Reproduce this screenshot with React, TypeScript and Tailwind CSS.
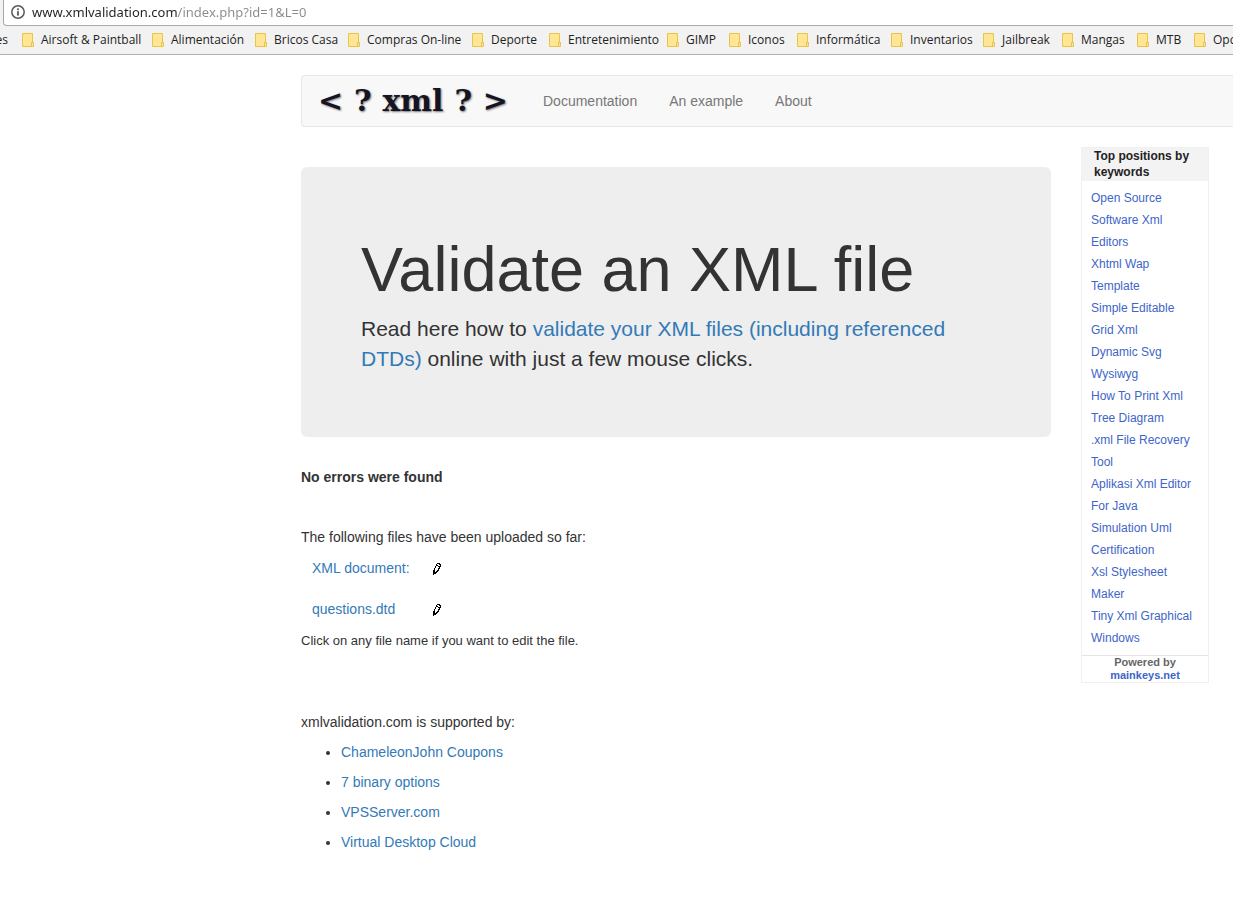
import React from "react";

type Bookmark = { name: string; width: string };

const bookmarks: Bookmark[] = [
  { name: "Airsoft & Paintball", width: "w-[130px]" },
  { name: "Alimentación", width: "w-[103px]" },
  { name: "Bricos Casa", width: "w-[93px]" },
  { name: "Compras On-line", width: "w-[124px]" },
  { name: "Deporte", width: "w-[77px]" },
  { name: "Entretenimiento", width: "w-[118px]" },
  { name: "GIMP", width: "w-[62px]" },
  { name: "Iconos", width: "w-[68px]" },
  { name: "Informática", width: "w-[94px]" },
  { name: "Inventarios", width: "w-[92px]" },
  { name: "Jailbreak", width: "w-[79px]" },
  { name: "Mangas", width: "w-[75px]" },
  { name: "MTB", width: "w-[57px]" },
  { name: "Opc", width: "w-[60px]" },
];

const keywords = [
  "Open Source Software Xml Editors",
  "Xhtml Wap Template",
  "Simple Editable Grid Xml",
  "Dynamic Svg Wysiwyg",
  "How To Print Xml",
  "Tree Diagram",
  ".xml File Recovery Tool",
  "Aplikasi Xml Editor For Java",
  "Simulation Uml Certification",
  "Xsl Stylesheet Maker",
  "Tiny Xml Graphical Windows",
];

const files = ["XML document:", "questions.dtd"];

const sponsors = [
  "ChameleonJohn Coupons",
  "7 binary options",
  "VPSServer.com",
  "Virtual Desktop Cloud",
];

function InfoIcon() {
  return (
    <svg width="16" height="16" viewBox="0 0 16 16" className="shrink-0" aria-hidden="true">
      <circle cx="8" cy="8" r="6.2" fill="none" stroke="#5a5a5a" strokeWidth="1.5" />
      <rect x="7.1" y="4.4" width="1.8" height="1.8" fill="#5a5a5a" />
      <rect x="7.1" y="7.2" width="1.8" height="4.4" fill="#5a5a5a" />
    </svg>
  );
}

function FolderIcon() {
  return (
    <svg width="12" height="14" viewBox="0 0 12 14" className="shrink-0" aria-hidden="true">
      <path d="M.5 .5h10v9h1v4H.5z" fill="#ffe694" stroke="#e8c54a" />
      <path d="M9.500 13v-3.500h2" fill="none" stroke="#e8c54a" />
    </svg>
  );
}

function PencilIcon() {
  return (
    <svg width="8" height="12" viewBox="0 0 8 12" shapeRendering="crispEdges" aria-hidden="true">
      <path
        d="M4 0h3v1H4zM3 1h1v1H3zM6 1h2v1H6zM3 2h2v1H3zM7 2h1v1H7zM2 3h1v1H2zM5 3h3v1H5zM2 4h1v1H2zM6 4h1v1H6zM1 5h1v1H1zM5 5h2v1H5zM1 6h1v1H1zM5 6h1v1H5zM0 7h2v1H0zM4 7h2v1H4zM0 8h2v1H0zM3 8h2v1H3zM0 9h4v1H0zM0 10h3v1H0zM0 11h1v1H0z"
        fill="#000"
      />
    </svg>
  );
}

function BrowserChrome() {
  return (
    <div className="overflow-hidden border-b border-[#b0b0b0] bg-[#f2f2f2] font-['Open_Sans',sans-serif]">
      <div className="ml-[3px] flex h-[26px] items-center gap-1.5 rounded-bl-sm border-b border-l border-[#a9a9a9] bg-white pb-0.5 pl-1.5">
        <InfoIcon />
        <input
          type="text"
          aria-label="Address"
          defaultValue="www.xmlvalidation.com/index.php?id=1&L=0"
          className="h-5 min-w-0 flex-1 bg-[linear-gradient(90deg,#222_145px,#8a8a8a_145px)] bg-clip-text font-['Noto_Sans',sans-serif] text-[13px] text-transparent outline-none"
        />
      </div>
      <nav aria-label="Bookmarks" className="flex h-7 items-center text-[12px] whitespace-nowrap text-[#222]">
        <a href="#" className="flex w-[22px] shrink-0 justify-end pr-3.5">es</a>
        {bookmarks.map((b) => (
          <a key={b.name} href="#" className={`flex shrink-0 items-center gap-[7px] ${b.width}`}>
            <FolderIcon />
            {b.name}
          </a>
        ))}
      </nav>
    </div>
  );
}

function Logo() {
  return (
    <a
      href="#"
      className="flex h-8 w-[190px] items-center justify-between font-['DejaVu_Serif',serif] text-[30px] leading-8 font-bold text-[#141424] [text-shadow:1px_1px_2px_#777]"
    >
      <span>&lt;</span>
      <span>?</span>
      <span>xml</span>
      <span>?</span>
      <span>&gt;</span>
    </a>
  );
}

function Sidebar() {
  return (
    <aside className="w-32 shrink-0 self-start border border-[#f0f0f0] text-[12px]">
      <h2 className="bg-[#f3f3f3] pr-2 pb-px pl-3 leading-4 font-bold text-[#222]">
        Top positions by keywords
      </h2>
      <ul className="px-[9px] py-1.5 leading-[22px]">
        {keywords.map((k) => (
          <li key={k}>
            <a href="#" className="text-[#4065c8]">{k}</a>
          </li>
        ))}
      </ul>
      <p className="border-t border-[#e4e4e4] text-center text-[11px] leading-[13px] font-bold text-[#666]">
        Powered by
        <br />
        <a href="#" className="text-[#4065c8]">mainkeys.net</a>
      </p>
    </aside>
  );
}

export default function App() {
  return (
    <div className="min-h-screen overflow-hidden bg-white font-['Liberation_Sans',Arial,sans-serif] text-[14px] leading-5 text-[#333]">
      <BrowserChrome />
      <div className="pt-5 pl-[301px]">
        <header className="flex h-[52px] items-center rounded-l border border-r-0 border-[#e7e7e7] bg-[#f8f8f8] pl-4">
          <Logo />
          <nav aria-label="Main" className="ml-[35px] flex gap-8 text-[#777]">
            <a href="#">Documentation</a>
            <a href="#">An example</a>
            <a href="#">About</a>
          </nav>
        </header>
        <div className="mt-5 flex gap-[30px] pr-6">
          <main className="min-w-0 flex-1 pt-5">
            <section className="rounded-md bg-[#eee] px-[60px] pt-[68px] pb-[63px]">
              <h1 className="mb-2.5 text-[63px] leading-[69px] font-normal">Validate an XML file</h1>
              <p className="text-[21px] leading-[30px]">
                Read here how to{" "}
                <a href="#" className="text-[#337ab7]">
                  validate your XML files (including referenced DTDs)
                </a>{" "}
                online with just a few mouse clicks.
              </p>
            </section>
            <p className="mt-[30px] font-bold">No errors were found</p>
            <p className="mt-10">The following files have been uploaded so far:</p>
            <table className="border-collapse">
              <tbody>
                {files.map((f) => (
                  <tr key={f} className="h-[41px]">
                    <td className="w-[132px] p-0 pl-[11px]">
                      <a href="#" className="text-[#337ab7]">{f}</a>
                    </td>
                    <td className="p-0">
                      <a href="#" aria-label={`Edit ${f}`} className="block pt-0.5">
                        <PencilIcon />
                      </a>
                    </td>
                  </tr>
                ))}
              </tbody>
            </table>
            <p className="mt-0.5 text-[13px]">Click on any file name if you want to edit the file.</p>
            <p className="mt-[61px]">xmlvalidation.com is supported by:</p>
            <ul className="mt-2.5 flex list-disc flex-col gap-2.5 pl-10">
              {sponsors.map((s) => (
                <li key={s}>
                  <a href="#" className="text-[#337ab7]">{s}</a>
                </li>
              ))}
            </ul>
          </main>
          <Sidebar />
        </div>
      </div>
    </div>
  );
}
